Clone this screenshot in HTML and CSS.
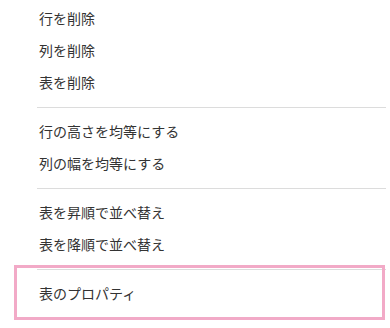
FILE: index.html
```html
<!DOCTYPE html>
<html lang="ja">
<head>
  <meta charset="UTF-8">
  <meta name="viewport" content="width=device-width, initial-scale=1.0">
  <title>表メニュー</title>
  <link rel="stylesheet" href="styles.css">
</head>
<body>

  <ul class="menu">
    <li class="menu-item">行を削除</li>
    <li class="menu-item">列を削除</li>
    <li class="menu-item">表を削除</li>
    <li class="menu-sep"></li>
    <li class="menu-item">行の高さを均等にする</li>
    <li class="menu-item">列の幅を均等にする</li>
    <li class="menu-sep"></li>
    <li class="menu-item">表を昇順で並べ替え</li>
    <li class="menu-item">表を降順で並べ替え</li>
    <li class="menu-sep"></li>
    <li class="menu-item">表のプロパティ</li>
  </ul>

  <div class="highlight"></div>

</body>
</html>
```

FILE: styles.css
```css
body {
  margin: 0;
  background-color: #fff;
  font-family: "Noto Sans CJK JP", "Noto Sans", sans-serif;
  color: #333;
  position: relative;
  height: 328px;
  overflow: hidden;
}
.menu {
  list-style: none;
  margin: 0;
  padding: 2px 4px 0 37px;
}
.menu-item {
  height: 32px;
  line-height: 32px;
  font-size: 14px;
  padding-left: 2px;
  white-space: nowrap;
}
.menu-sep {
  height: 1px;
  background-color: #dcdcdc;
  margin: 9px 0 7px;
}
.highlight {
  position: absolute;
  left: 14px;
  top: 265px;
  width: 365px;
  height: 49px;
  border: 3px solid #f2aac7;
}
```
